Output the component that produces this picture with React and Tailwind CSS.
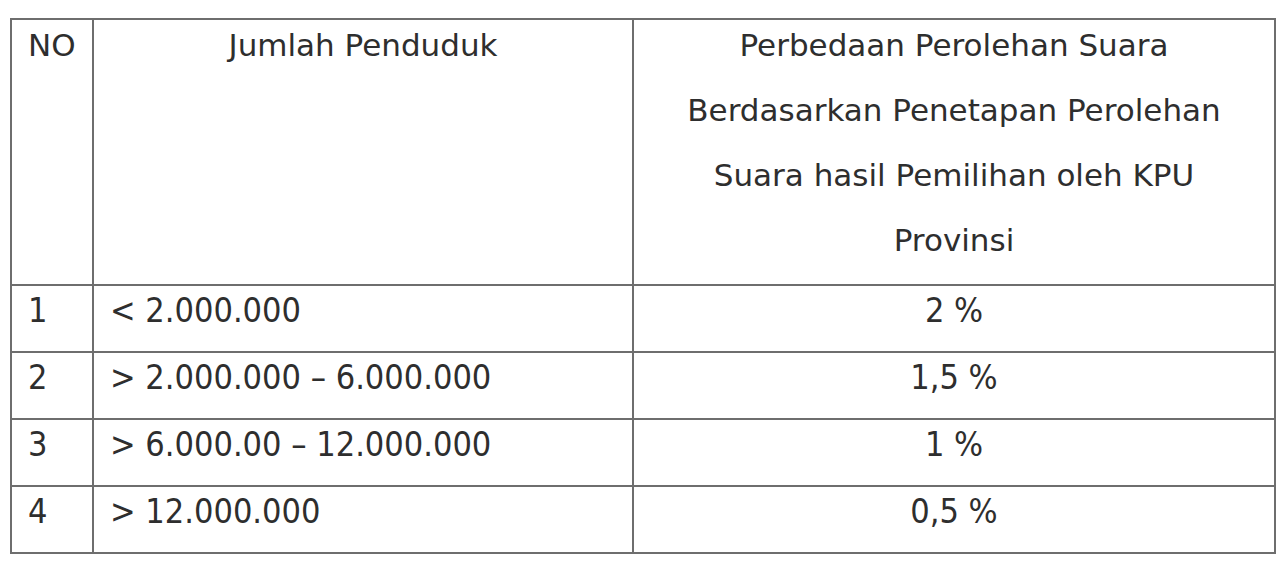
import React from "react";

const rows = [
  ["1", "< 2.000.000", "2 %"],
  ["2", "> 2.000.000 – 6.000.000", "1,5 %"],
  ["3", "> 6.000.00 – 12.000.000", "1 %"],
  ["4", "> 12.000.000", "0,5 %"],
];

export default function App() {
  return (
    <div className="w-[1280px] h-[568px] bg-white pt-[18px] pl-[10px] overflow-hidden">
      <table className="table-fixed border-collapse w-[1264px] text-[#2e2e2e] font-['DejaVu_Sans_Condensed','DejaVu_Sans',sans-serif]">
        <colgroup>
          <col className="w-[82px]" />
          <col className="w-[540px]" />
          <col className="w-[642px]" />
        </colgroup>
        <tbody>
          <tr className="h-[266px] font-['DejaVu_Sans',sans-serif]">
            <td className="border-2 border-[#6e6e6e] align-top pl-[16px] text-[31px] leading-[65px]">
              <div className="-mt-[7px]">NO</div>
            </td>
            <td className="border-2 border-[#6e6e6e] align-top text-center text-[31px] leading-[65px]">
              <div className="-mt-[7px]">Jumlah Penduduk</div>
            </td>
            <td className="border-2 border-[#6e6e6e] align-top text-center text-[31px] leading-[65px] px-[20px]">
              <div className="-mt-[7px] whitespace-nowrap">
                Perbedaan Perolehan Suara
                <br />
                Berdasarkan Penetapan Perolehan
                <br />
                Suara hasil Pemilihan oleh KPU
                <br />
                Provinsi
              </div>
            </td>
          </tr>
          {rows.map(([no, range, pct]) => (
            <tr key={no} className="h-[67px]">
              <td className="border-2 border-[#6e6e6e] align-top pl-[16px] text-[34px] leading-[48px]">
                {no}
              </td>
              <td className="border-2 border-[#6e6e6e] align-top pl-[16px] text-[34px] leading-[48px] whitespace-nowrap">
                {range}
              </td>
              <td className="border-2 border-[#6e6e6e] align-top text-center text-[34px] leading-[48px]">
                {pct}
              </td>
            </tr>
          ))}
        </tbody>
      </table>
    </div>
  );
}
